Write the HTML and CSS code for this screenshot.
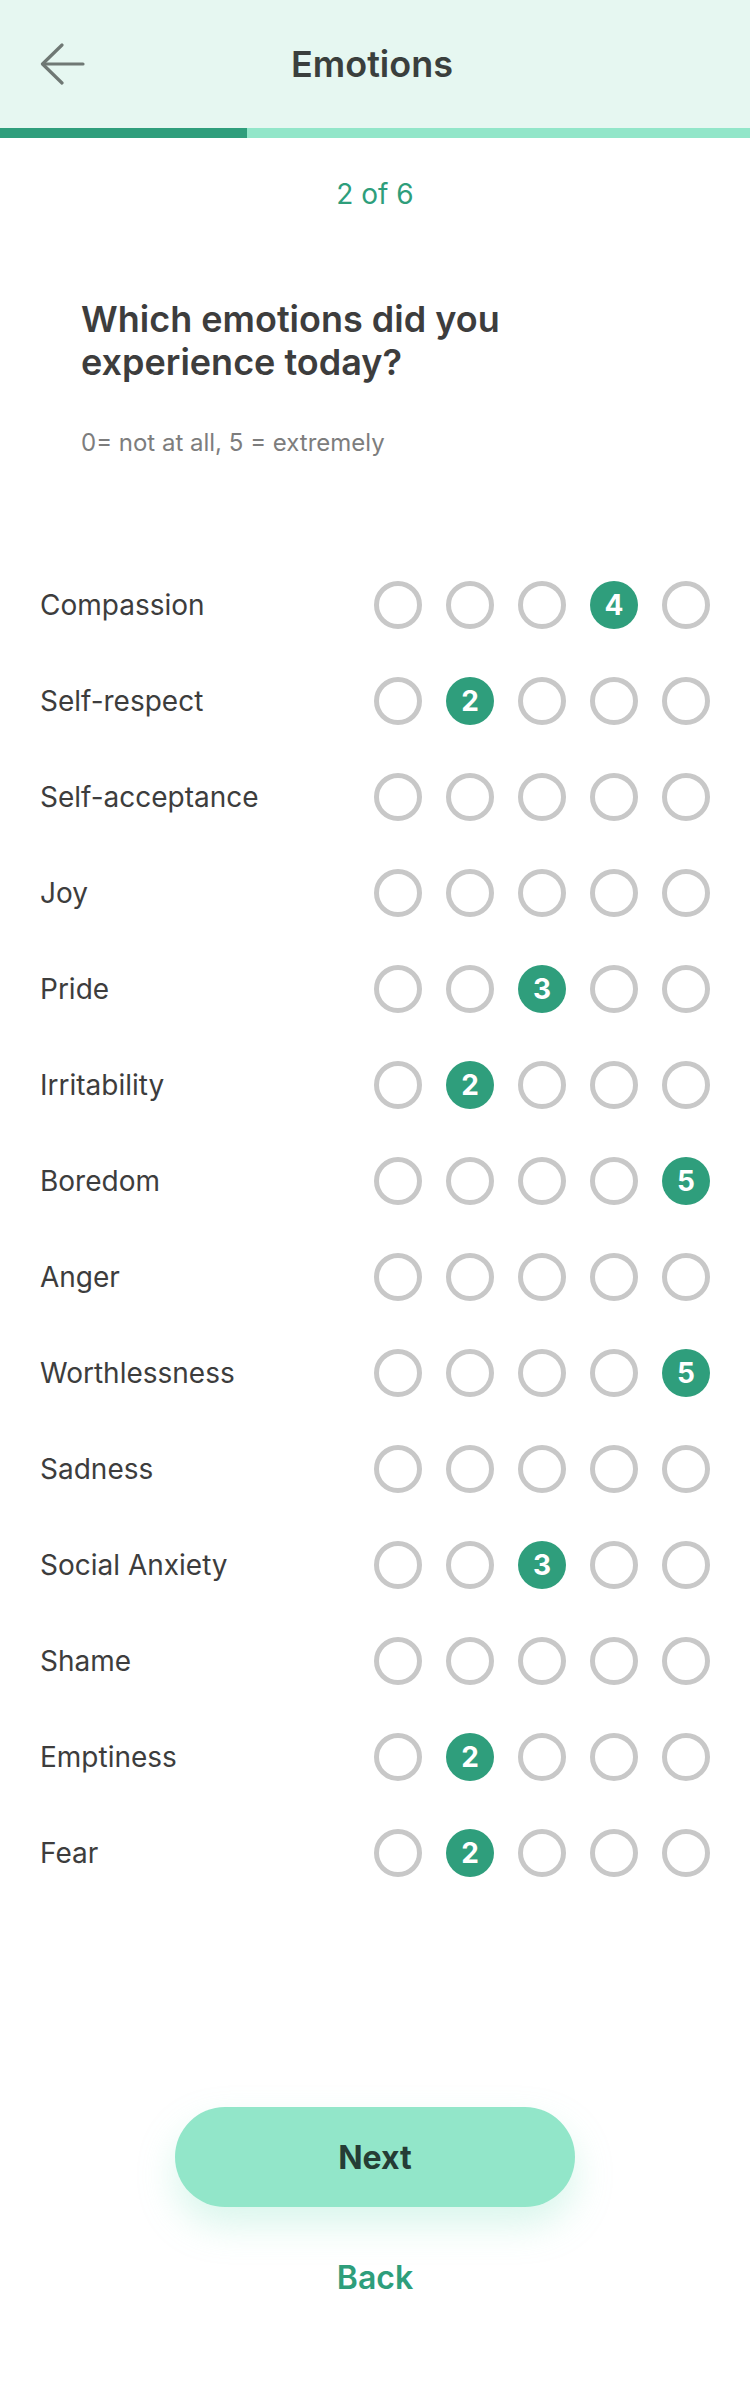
FILE: index.html
```html
<!DOCTYPE html>
<html lang="en">
<head>
<meta charset="utf-8">
<title>Emotions</title>
<link rel="stylesheet" href="styles.css">
</head>
<body>
<div class="screen">
  <header class="topbar">
    <button class="back-icon" aria-label="Back">
      <svg width="46" height="42" viewBox="0 0 46 42" fill="none" stroke="#6f7874" stroke-width="3.2" stroke-linecap="round" stroke-linejoin="round">
        <path d="M43 21H3"/>
        <path d="M22 2L2.5 21L22 40"/>
      </svg>
    </button>
    <h1 class="topbar-title">Emotions</h1>
    <span class="topbar-spacer"></span>
  </header>
  <div class="progress"><div class="progress-fill" style="width:247px"></div></div>

  <p class="step">2 of 6</p>

  <h2 class="question">Which emotions did you<br>experience today?</h2>
  <p class="hint">0= not at all, 5 = extremely</p>

  <div class="list">
    <div class="row"><span class="label">Compassion</span><div class="dots"><span class="dot"></span><span class="dot"></span><span class="dot"></span><span class="dot on">4</span><span class="dot"></span></div></div>
    <div class="row"><span class="label">Self-respect</span><div class="dots"><span class="dot"></span><span class="dot on">2</span><span class="dot"></span><span class="dot"></span><span class="dot"></span></div></div>
    <div class="row"><span class="label">Self-acceptance</span><div class="dots"><span class="dot"></span><span class="dot"></span><span class="dot"></span><span class="dot"></span><span class="dot"></span></div></div>
    <div class="row"><span class="label">Joy</span><div class="dots"><span class="dot"></span><span class="dot"></span><span class="dot"></span><span class="dot"></span><span class="dot"></span></div></div>
    <div class="row"><span class="label">Pride</span><div class="dots"><span class="dot"></span><span class="dot"></span><span class="dot on">3</span><span class="dot"></span><span class="dot"></span></div></div>
    <div class="row"><span class="label">Irritability</span><div class="dots"><span class="dot"></span><span class="dot on">2</span><span class="dot"></span><span class="dot"></span><span class="dot"></span></div></div>
    <div class="row"><span class="label">Boredom</span><div class="dots"><span class="dot"></span><span class="dot"></span><span class="dot"></span><span class="dot"></span><span class="dot on">5</span></div></div>
    <div class="row"><span class="label">Anger</span><div class="dots"><span class="dot"></span><span class="dot"></span><span class="dot"></span><span class="dot"></span><span class="dot"></span></div></div>
    <div class="row"><span class="label">Worthlessness</span><div class="dots"><span class="dot"></span><span class="dot"></span><span class="dot"></span><span class="dot"></span><span class="dot on">5</span></div></div>
    <div class="row"><span class="label">Sadness</span><div class="dots"><span class="dot"></span><span class="dot"></span><span class="dot"></span><span class="dot"></span><span class="dot"></span></div></div>
    <div class="row"><span class="label">Social Anxiety</span><div class="dots"><span class="dot"></span><span class="dot"></span><span class="dot on">3</span><span class="dot"></span><span class="dot"></span></div></div>
    <div class="row"><span class="label">Shame</span><div class="dots"><span class="dot"></span><span class="dot"></span><span class="dot"></span><span class="dot"></span><span class="dot"></span></div></div>
    <div class="row"><span class="label">Emptiness</span><div class="dots"><span class="dot"></span><span class="dot on">2</span><span class="dot"></span><span class="dot"></span><span class="dot"></span></div></div>
    <div class="row"><span class="label">Fear</span><div class="dots"><span class="dot"></span><span class="dot on">2</span><span class="dot"></span><span class="dot"></span><span class="dot"></span></div></div>
  </div>

  <div class="actions">
    <button class="btn-next">Next</button>
    <button class="btn-back">Back</button>
  </div>
</div>
</body>
</html>
```

FILE: styles.css
```css
* { box-sizing: border-box; }

html, body {
  margin: 0;
  padding: 0;
  background: #ffffff;
}

body {
  font-family: Inter, "Noto Sans", "Liberation Sans", sans-serif;
  color: #3d3d3d;
  width: 750px;
}

.screen {
  display: flex;
  flex-direction: column;
  width: 750px;
}

.topbar {
  height: 128px;
  background: #e6f7f1;
  display: grid;
  grid-template-columns: 1fr auto 1fr;
  align-items: center;
  padding: 0 46px 0 40px;
}

.back-icon {
  justify-self: start;
  border: 0;
  background: none;
  padding: 0;
  width: 46px;
  height: 42px;
  display: flex;
}

.topbar-title {
  margin: 0;
  font-size: 36px;
  line-height: 44px;
  font-weight: 600;
  color: #3a3f3d;
}

.progress {
  height: 10px;
  background: #92e6c9;
  display: flex;
}

.progress-fill {
  height: 10px;
  background: #2f9e7c;
}

.step {
  margin: 39px 0 0;
  text-align: center;
  font-size: 28px;
  line-height: 34px;
  color: #2e9e7b;
}

.question {
  margin: 87px 0 0;
  padding-left: 81px;
  font-size: 36px;
  line-height: 43px;
  font-weight: 600;
  color: #3d3d3d;
}

.hint {
  margin: 44px 0 0;
  padding-left: 81px;
  font-size: 24px;
  line-height: 29px;
  color: #7d7d7d;
}

.list {
  margin-top: 100px;
  padding: 0 40px;
  display: flex;
  flex-direction: column;
}

.row {
  height: 96px;
  display: flex;
  align-items: center;
  justify-content: space-between;
}

.label {
  font-size: 28px;
  line-height: 34px;
  color: #3d3d3d;
}

.dots {
  display: flex;
  gap: 24px;
}

.dot {
  width: 48px;
  height: 48px;
  border-radius: 50%;
  border: 5px solid #c8c8c8;
  display: flex;
  align-items: center;
  justify-content: center;
  font-size: 28px;
  font-weight: 700;
  color: #ffffff;
}

.dot.on {
  border: 0;
  background: #2f9e7c;
}

.actions {
  margin-top: 206px;
  display: flex;
  flex-direction: column;
  align-items: center;
}

.btn-next {
  width: 400px;
  height: 100px;
  border: 0;
  border-radius: 50px;
  background: #92e6c9;
  box-shadow: 0 18px 36px rgba(146, 230, 201, 0.35);
  font-family: inherit;
  font-size: 32px;
  font-weight: 700;
  color: #253d35;
}

.btn-back {
  margin-top: 51px;
  border: 0;
  background: none;
  padding: 0;
  font-family: inherit;
  font-size: 32px;
  line-height: 39px;
  font-weight: 600;
  color: #2e9e7b;
}
```
